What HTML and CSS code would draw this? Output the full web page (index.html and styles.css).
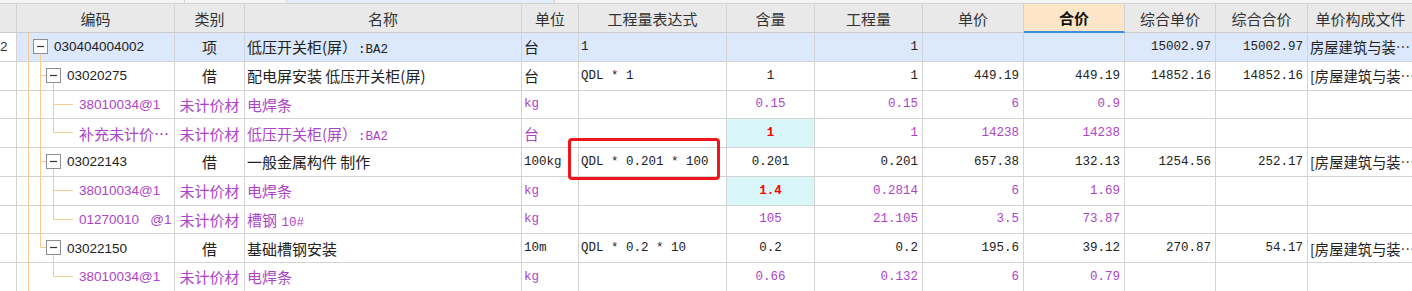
FILE: index.html
```html
<!DOCTYPE html>
<html lang="zh-CN">
<head>
<meta charset="utf-8">
<title>分部分项</title>
<link rel="stylesheet" href="styles.css">
</head>
<body>
<div class="topstrip">
  <div class="tab t1"></div>
  <div class="tab t2"></div>
  <div class="tab t3"></div>
  <div class="tab t4"></div>
</div>
<div class="grid">
  <div class="row head">
    <div class="c"></div>
    <div class="c ctr">编码</div>
    <div class="c ctr">类别</div>
    <div class="c ctr">名称</div>
    <div class="c ctr">单位</div>
    <div class="c ctr">工程量表达式</div>
    <div class="c ctr">含量</div>
    <div class="c ctr">工程量</div>
    <div class="c ctr">单价</div>
    <div class="c ctr sel">合价</div>
    <div class="c ctr">综合单价</div>
    <div class="c ctr">综合合价</div>
    <div class="c ctr">单价构成文件</div>
  </div>

  <!-- row 1 -->
  <div class="row cur">
    <div class="c num0">2</div>
    <div class="c code"><svg class="tree" width="37" height="29"><path class="ln" d="M11.5 0V29M23.5 20.5V29"/><rect class="bx" x="16.5" y="6.5" width="14" height="14"/><path class="mn" d="M20 13.5H27"/></svg><span>030404004002</span></div>
    <div class="c ctr cn">项</div>
    <div class="c cn lft"><span class="t">低压开关柜(屏）<span class="mono">:BA2</span></span></div>
    <div class="c cn lft">台</div>
    <div class="c mono lft">1</div>
    <div class="c mono ctr"></div>
    <div class="c mono rgt">1</div>
    <div class="c mono rgt"></div>
    <div class="c mono rgt"></div>
    <div class="c mono rgt">15002.97</div>
    <div class="c mono rgt">15002.97</div>
    <div class="c cn lft file">房屋建筑与装…</div>
  </div>

  <!-- row 2 -->
  <div class="row">
    <div class="c num0"></div>
    <div class="c code"><svg class="tree" width="50" height="29"><path class="ln" d="M11.5 0V29M23.5 0V29M23.5 13.5H29.5M36.5 20.5V29"/><rect class="bx" x="29.5" y="6.5" width="14" height="14"/><path class="mn" d="M33 13.5H40"/></svg><span>03020275</span></div>
    <div class="c ctr cn">借</div>
    <div class="c cn lft">配电屏安装 低压开关柜(屏)</div>
    <div class="c cn lft">台</div>
    <div class="c mono lft">QDL * 1</div>
    <div class="c mono ctr">1</div>
    <div class="c mono rgt">1</div>
    <div class="c mono rgt">449.19</div>
    <div class="c mono rgt">449.19</div>
    <div class="c mono rgt">14852.16</div>
    <div class="c mono rgt">14852.16</div>
    <div class="c cn lft file">[房屋建筑与装…</div>
  </div>

  <!-- row 3 -->
  <div class="row mat">
    <div class="c num0"></div>
    <div class="c code"><svg class="tree" width="62" height="29"><path class="ln" d="M11.5 0V29M23.5 0V29M36.5 0V29M36.5 13.5H56"/></svg><span>38010034@1</span></div>
    <div class="c ctr cn">未计价材</div>
    <div class="c cn lft">电焊条</div>
    <div class="c mono lft">kg</div>
    <div class="c mono lft"></div>
    <div class="c mono ctr">0.15</div>
    <div class="c mono rgt">0.15</div>
    <div class="c mono rgt">6</div>
    <div class="c mono rgt">0.9</div>
    <div class="c mono rgt"></div>
    <div class="c mono rgt"></div>
    <div class="c cn lft file"></div>
  </div>

  <!-- row 4 -->
  <div class="row mat">
    <div class="c num0"></div>
    <div class="c code"><svg class="tree" width="62" height="29"><path class="ln" d="M11.5 0V29M23.5 0V29M36.5 0V13.5H56"/></svg><span class="cn">补充未计价…</span></div>
    <div class="c ctr cn">未计价材</div>
    <div class="c cn lft"><span class="t">低压开关柜(屏）<span class="mono">:BA2</span></span></div>
    <div class="c cn lft">台</div>
    <div class="c mono lft"></div>
    <div class="c mono ctr hl">1</div>
    <div class="c mono rgt">1</div>
    <div class="c mono rgt">14238</div>
    <div class="c mono rgt">14238</div>
    <div class="c mono rgt"></div>
    <div class="c mono rgt"></div>
    <div class="c cn lft file"></div>
  </div>

  <!-- row 5 -->
  <div class="row">
    <div class="c num0"></div>
    <div class="c code"><svg class="tree" width="50" height="29"><path class="ln" d="M11.5 0V29M23.5 0V29M23.5 13.5H29.5M36.5 20.5V29"/><rect class="bx" x="29.5" y="6.5" width="14" height="14"/><path class="mn" d="M33 13.5H40"/></svg><span>03022143</span></div>
    <div class="c ctr cn">借</div>
    <div class="c cn lft">一般金属构件 制作</div>
    <div class="c mono lft">100kg</div>
    <div class="c mono lft">QDL * 0.201 * 100</div>
    <div class="c mono ctr">0.201</div>
    <div class="c mono rgt">0.201</div>
    <div class="c mono rgt">657.38</div>
    <div class="c mono rgt">132.13</div>
    <div class="c mono rgt">1254.56</div>
    <div class="c mono rgt">252.17</div>
    <div class="c cn lft file">[房屋建筑与装…</div>
  </div>

  <!-- row 6 -->
  <div class="row mat">
    <div class="c num0"></div>
    <div class="c code"><svg class="tree" width="62" height="29"><path class="ln" d="M11.5 0V29M23.5 0V29M36.5 0V29M36.5 13.5H56"/></svg><span>38010034@1</span></div>
    <div class="c ctr cn">未计价材</div>
    <div class="c cn lft">电焊条</div>
    <div class="c mono lft">kg</div>
    <div class="c mono lft"></div>
    <div class="c mono ctr hl">1.4</div>
    <div class="c mono rgt">0.2814</div>
    <div class="c mono rgt">6</div>
    <div class="c mono rgt">1.69</div>
    <div class="c mono rgt"></div>
    <div class="c mono rgt"></div>
    <div class="c cn lft file"></div>
  </div>

  <!-- row 7 -->
  <div class="row mat">
    <div class="c num0"></div>
    <div class="c code"><svg class="tree" width="62" height="29"><path class="ln" d="M11.5 0V29M23.5 0V29M36.5 0V13.5H56"/></svg><span class="pre">01270010   @1</span></div>
    <div class="c ctr cn">未计价材</div>
    <div class="c cn lft"><span class="t">槽钢 <span class="mono">10#</span></span></div>
    <div class="c mono lft">kg</div>
    <div class="c mono lft"></div>
    <div class="c mono ctr">105</div>
    <div class="c mono rgt">21.105</div>
    <div class="c mono rgt">3.5</div>
    <div class="c mono rgt">73.87</div>
    <div class="c mono rgt"></div>
    <div class="c mono rgt"></div>
    <div class="c cn lft file"></div>
  </div>

  <!-- row 8 -->
  <div class="row">
    <div class="c num0"></div>
    <div class="c code"><svg class="tree" width="50" height="29"><path class="ln" d="M11.5 0V29M23.5 0V13.5H29.5M36.5 20.5V29"/><rect class="bx" x="29.5" y="6.5" width="14" height="14"/><path class="mn" d="M33 13.5H40"/></svg><span>03022150</span></div>
    <div class="c ctr cn">借</div>
    <div class="c cn lft">基础槽钢安装</div>
    <div class="c mono lft">10m</div>
    <div class="c mono lft">QDL * 0.2 * 10</div>
    <div class="c mono ctr">0.2</div>
    <div class="c mono rgt">0.2</div>
    <div class="c mono rgt">195.6</div>
    <div class="c mono rgt">39.12</div>
    <div class="c mono rgt">270.87</div>
    <div class="c mono rgt">54.17</div>
    <div class="c cn lft file">[房屋建筑与装…</div>
  </div>

  <!-- row 9 -->
  <div class="row mat">
    <div class="c num0"></div>
    <div class="c code"><svg class="tree" width="62" height="29"><path class="ln" d="M11.5 0V29M36.5 0V13.5H56"/></svg><span>38010034@1</span></div>
    <div class="c ctr cn">未计价材</div>
    <div class="c cn lft">电焊条</div>
    <div class="c mono lft">kg</div>
    <div class="c mono lft"></div>
    <div class="c mono ctr">0.66</div>
    <div class="c mono rgt">0.132</div>
    <div class="c mono rgt">6</div>
    <div class="c mono rgt">0.79</div>
    <div class="c mono rgt"></div>
    <div class="c mono rgt"></div>
    <div class="c cn lft file"></div>
  </div>

  <div class="mark"></div>
</div>
</body>
</html>
```

FILE: styles.css
```css
html, body {
  margin: 0;
  padding: 0;
  background: #ffffff;
  overflow: hidden;
}

body {
  width: 1412px;
  height: 291px;
  font-family: "Noto Sans CJK SC", sans-serif;
  color: #222222;
}

.topstrip {
  height: 3px;
  display: flex;
  background: #f4f4f4;
}

.tab {
  height: 3px;
  border-right: 1px solid #d6d6d6;
  box-sizing: border-box;
}
.t1 { width: 185px; }
.t2 { width: 102px; }
.t3 { width: 268px; background: #e4eefa; }
.t4 { flex: 1; border-right: none; }

.grid {
  position: relative;
}

.row {
  display: grid;
  grid-template-columns: 17px 158px 70px 277px 57px 148px 88px 108px 101px 101px 91px 92px 105px;
  height: 28.75px;
}

.row.head {
  height: 30px;
  background: #e9e9e9;
  border-top: 1px solid #d2d2d2;
  box-sizing: border-box;
  color: #333333;
}

.c {
  box-sizing: border-box;
  border-right: 1px solid #d3d3d3;
  border-bottom: 1px solid #d3d3d3;
  display: flex;
  align-items: center;
  overflow: hidden;
  white-space: nowrap;
  min-width: 0;
}

.row > .c:last-child {
  border-right: none;
}

.head .c {
  font-size: 15px;
  border-bottom-color: #cccccc;
}

.head .sel {
  background: #fde6c7;
  font-weight: bold;
  color: #111111;
  border-bottom: 2px solid #3b8ee2;
}

.ctr { justify-content: center; }
.lft { justify-content: flex-start; padding-left: 2px; }
.rgt { justify-content: flex-end; padding-right: 4px; }

.cn {
  font-family: "Noto Sans CJK SC", sans-serif;
  font-size: 15px;
}

.mono {
  font-family: "Liberation Mono", monospace;
  font-size: 12.5px;
}

.t {
  white-space: pre;
}

.t .mono {
  margin-left: 1px;
}

.num0 {
  font-family: "Liberation Sans", sans-serif;
  font-size: 13.5px;
  color: #333333;
  padding-left: 0;
  background: #ffffff;
}

.code {
  font-family: "Liberation Sans", sans-serif;
  font-size: 13.5px;
  align-items: stretch;
}

.code span {
  display: flex;
  align-items: center;
}

.code .cn {
  font-size: 15px;
}

.pre {
  white-space: pre;
}

.tree {
  display: block;
  flex: none;
  height: 29px;
}

.tree .ln {
  fill: none;
  stroke: #fbc98d;
  stroke-width: 1;
}

.tree .bx {
  fill: #ffffff;
  stroke: #8e8e8e;
  stroke-width: 1;
}

.tree .mn {
  fill: none;
  stroke: #333333;
  stroke-width: 1.2;
}

.cur .c {
  background: #dce8fb;
}

.cur .c.num0 {
  background: #ffffff;
}

.mat .c {
  color: #ad44c8;
}

.hl {
  background: #d9f6f8;
  color: #ff0000 !important;
  font-weight: bold;
}

.file {
  padding-left: 2px;
  font-size: 14.3px;
}

.mark {
  position: absolute;
  left: 568px;
  top: 135px;
  width: 152px;
  height: 42px;
  box-sizing: border-box;
  border: 3px solid #f2141b;
  border-radius: 4px;
}
```
